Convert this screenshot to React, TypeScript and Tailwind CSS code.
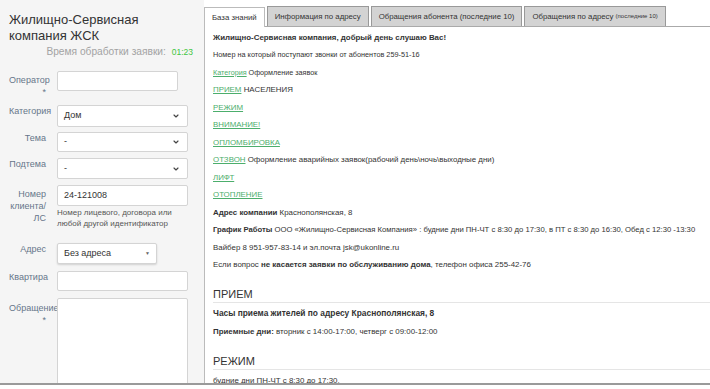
import { ChevronDown } from "lucide-react";

const label = "w-[37px] shrink-0 text-right text-[9px] leading-[12px] text-[#66758a]";
const field = "bg-white border border-[#d4d4d4] rounded-[2px] text-[9px] text-[#333] flex items-center px-[6px]";
const row = "flex items-start gap-[11px] pl-[9px]";

function Select({ value, disabled, h = "h-[21px]" }: { value: string; disabled?: boolean; h?: string }) {
  return (
    <div className={`${field} w-[131px] ${h} justify-between ${disabled ? "bg-[#ebebeb]" : ""}`}>
      <span>{value}</span>
      <ChevronDown size={8} strokeWidth={3.5} className="text-[#444] mr-[1px]" />
    </div>
  );
}

function Link({ children }: { children: React.ReactNode }) {
  return <span className="text-[#4cae6c] underline">{children}</span>;
}

export default function App() {
  return (
    <div className="w-[710px] h-[389px] overflow-hidden flex flex-col bg-white font-['Liberation_Sans',Arial,sans-serif] text-[#333]">
      <div className="flex flex-1 min-h-0">
        {/* Left form */}
        <aside className="w-[204px] shrink-0 bg-[#f5f5f5] overflow-hidden">
          <h1 className="pl-[9px] pt-[12px] text-[13px] leading-[16px] text-[#333]">
            Жилищно-Сервисная<br />компания ЖСК
          </h1>
          <div className="mt-[2px] pr-[11px] text-right text-[10.2px] leading-[12px] text-[#a3a3a3]">
            Время обработки заявки: <span className="ml-[3px] text-[8.5px] text-[#41c541]">01:23</span>
          </div>

          <div className={`${row} mt-[13px]`}>
            <div className={`${label} h-[20px] pt-[3px]`}>Оператор<br />*</div>
            <div className={`${field} w-[121px] h-[20px]`} />
          </div>
          <div className={`${row} mt-[14px] items-center`}>
            <div className={label}>Категория</div>
            <Select value="Дом" h="h-[22px]" />
          </div>
          <div className={`${row} mt-[5px] items-center`}>
            <div className={label}>Тема</div>
            <Select value="-" h="h-[20px]" />
          </div>
          <div className={`${row} mt-[6px] items-center`}>
            <div className={label}>Подтема</div>
            <Select value="-" disabled />
          </div>
          <div className={`${row} mt-[6px]`}>
            <div className={`${label} pt-[3px] leading-[12.5px]`}>Номер клиента/ ЛС</div>
            <div>
              <div className={`${field} w-[131px] h-[21px]`}>24-121008</div>
              <div className="mt-[1px] text-[8px] leading-[11px] text-[#555]">
                Номер лицевого, договора или<br />любой другой идентификатор
              </div>
            </div>
          </div>
          <div className={`${row} mt-[14px] items-center`}>
            <div className={label}>Адрес</div>
            <div className={`${field} w-[100px] h-[21px] justify-between shadow-[0_1px_2px_rgba(0,0,0,0.15)]`}>
              <span>Без адреса</span>
              <span className="text-[5px] text-[#666]">▼</span>
            </div>
          </div>
          <div className={`${row} mt-[7px] items-center`}>
            <div className={label}>Квартира</div>
            <div className={`${field} w-[131px] h-[20px]`} />
          </div>
          <div className={`${row} mt-[7px]`}>
            <div className={`${label} h-[20px] pt-[4px] whitespace-nowrap text-left`}>
              Обращение<div className="text-right">*</div>
            </div>
            <div className={`${field} w-[131px] h-[120px]`} />
          </div>
        </aside>

        {/* Right knowledge base */}
        <main className="flex-1 min-w-0 flex flex-col">
          <div className="flex items-end gap-[2px] pt-[6px] border-b border-[#aaa] bg-white text-[7.8px]">
            <div className="h-[20px] px-[7px] flex items-center bg-white border border-b-0 border-[#bbb] -mb-px relative z-10">База знаний</div>
            <div className="h-[20px] px-[7px] flex items-center bg-[#d3d3d3] border border-b-0 border-[#999]">Информация по адресу</div>
            <div className="h-[20px] px-[7px] flex items-center bg-[#d3d3d3] border border-b-0 border-[#999]">Обращения абонента (последние 10)</div>
            <div className="h-[20px] px-[7px] flex items-center bg-[#d3d3d3] border border-b-0 border-[#999]">
              Обращения по адресу&nbsp;<span className="text-[6px]">(последние 10)</span>
            </div>
          </div>
          <div className="flex-1 border-l border-[#bbb] pl-[8px] pt-[3px] text-[7.9px] leading-[17.5px] whitespace-nowrap overflow-hidden">
            <p className="font-bold leading-[16px]">Жилищно-Сервисная компания, добрый день слушаю Вас!</p>
            <p className="text-[7.3px]">Номер на который поступают звонки от абонентов 259-51-16</p>
            <p className="text-[7.2px]"><Link>Категория</Link> Оформление заявок</p>
            <p><Link>ПРИЕМ</Link> НАСЕЛЕНИЯ</p>
            <p><Link>РЕЖИМ</Link></p>
            <p><Link>ВНИМАНИЕ!</Link></p>
            <p><Link>ОПЛОМБИРОВКА</Link></p>
            <p><Link>ОТЗВОН</Link> Оформление аварийных заявок(рабочий день\ночь\выходные дни)</p>
            <p><Link>ЛИФТ</Link></p>
            <p><Link>ОТОПЛЕНИЕ</Link></p>
            <p><b>Адрес компании</b> Краснополянская, 8</p>
            <p className="text-[7.7px]"><b>График Работы</b> ООО «Жилищно-Сервисная Компания» : будние дни ПН-ЧТ с 8:30 до 17:30, в ПТ с 8:30 до 16:30, Обед с 12:30 -13:30</p>
            <p>Вайбер 8 951-957-83-14 и эл.почта jsk@ukonline.ru</p>
            <p>Если вопрос <b>не касается заявки по обслуживанию дома</b>, телефон офиса 255-42-76</p>

            <h2 className="mt-[13.5px] text-[11px] leading-[14px] pb-[1px] border-b border-[#e5e5e5]">ПРИЕМ</h2>
            <p className="mt-[2px] font-bold text-[8.4px]">Часы приема жителей по адресу Краснополянская, 8</p>
            <p><b>Приемные дни:</b> вторник с 14:00-17:00, четверг с 09:00-12:00</p>

            <h2 className="mt-[13.5px] text-[11px] leading-[14px] pb-[1px] border-b border-[#e5e5e5]">РЕЖИМ</h2>
            <p className="mt-[2px]">будние дни ПН-ЧТ с 8:30 до 17:30,</p>
          </div>
        </main>
      </div>

      {/* bottom window strip */}
      <div className="h-[6px] shrink-0 border-t-2 border-[#9a9a9a] bg-white" />
    </div>
  );
}
